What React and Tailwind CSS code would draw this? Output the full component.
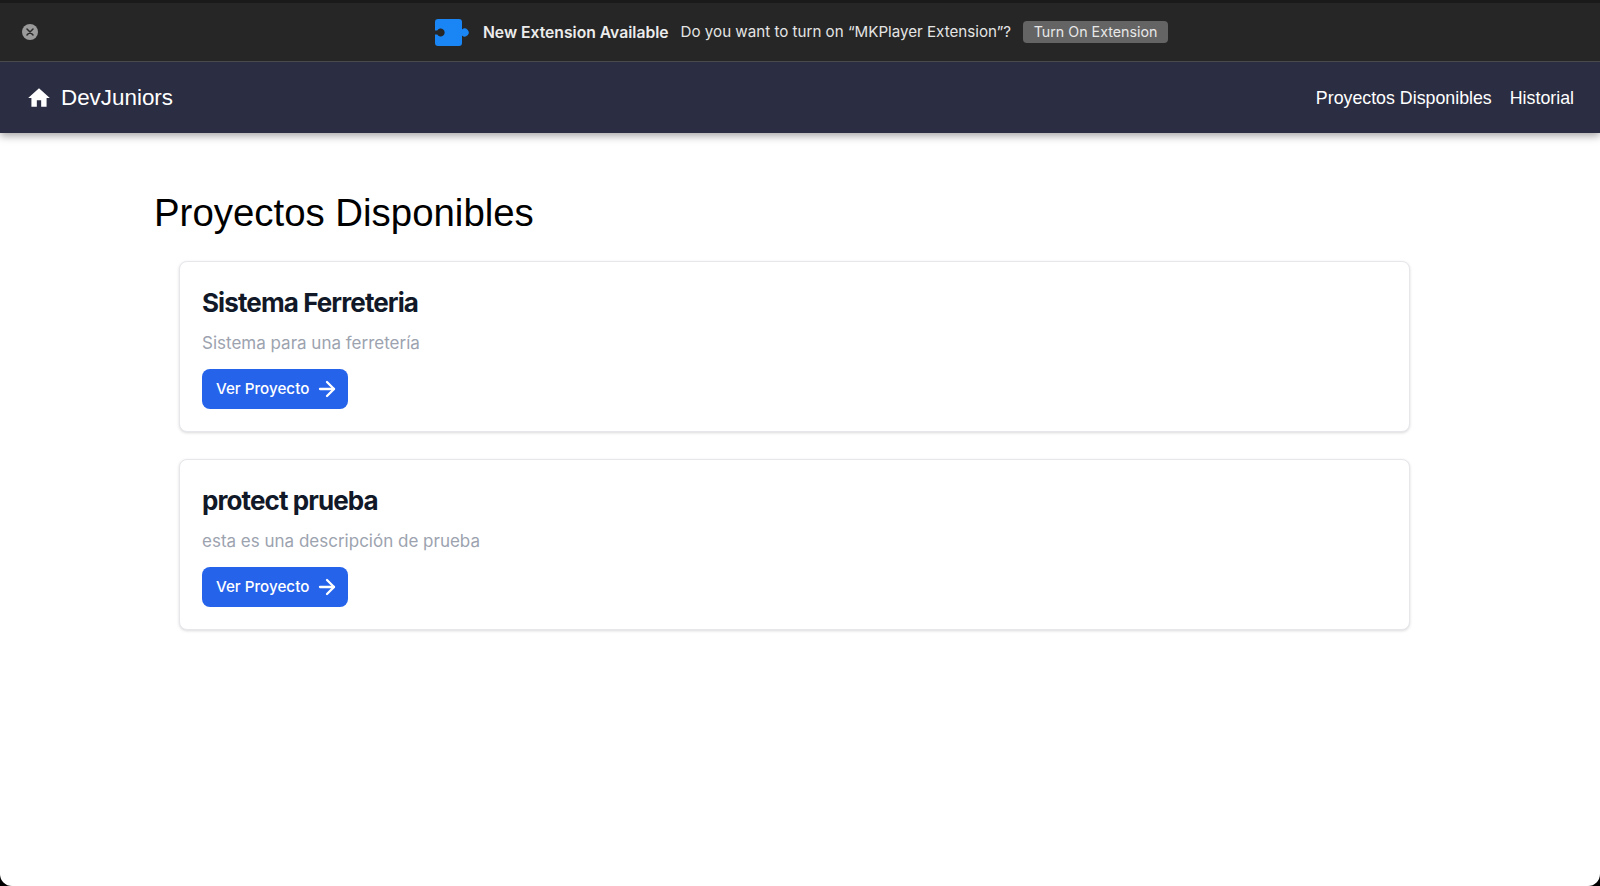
import { MdHome } from "react-icons/md";
import { ArrowRight } from "lucide-react";

const PROJECTS = [
    { id: 1, title: "Sistema Ferreteria", description: "Sistema para una ferretería" },
    { id: 2, title: "protect prueba", description: "esta es una descripción de prueba" },
];

function PuzzleIcon() {
    return (
        <svg width="34" height="27" viewBox="0 0 34 27" className="block">
            <path
                fill="#1a86f5"
                d="M3 0H24a3 3 0 0 1 3 3V10.5a4 4 0 1 1 0 6V24a3 3 0 0 1-3 3H3a3 3 0 0 1-3-3V15.5H2.2a4 4 0 1 0 0-4H0V3a3 3 0 0 1 3-3Z"
            />
        </svg>
    );
}

function ExtensionBar() {
    return (
        <div className="relative flex h-[59px] items-center justify-center border-b border-[#4a4a4a] bg-[#262626]">
            <div className="absolute left-[22px] top-[21px] flex h-4 w-4 items-center justify-center rounded-full bg-[#9a9a9a]">
                <svg width="8" height="8" viewBox="0 0 8 8">
                    <path d="M1 1L7 7M7 1L1 7" stroke="#2a2a2a" strokeWidth="1.5" strokeLinecap="round" />
                </svg>
            </div>
            <div className="ml-[3px] flex items-center font-['Inter',sans-serif]">
                <PuzzleIcon />
                <span className="ml-[14px] mt-[1px] text-[15.7px] font-semibold text-[#ececec]">New Extension Available</span>
                <span className="ml-[12px] mt-[1px] text-[15.15px] text-[#e4e4e4]">Do you want to turn on “MKPlayer Extension”?</span>
                <button className="ml-[12px] h-[22px] w-[145px] rounded-[4px] bg-[#646464] text-[14.25px] leading-none text-[#e8e8e8]">
                    Turn On Extension
                </button>
            </div>
        </div>
    );
}

function Navbar() {
    return (
        <nav className="relative flex h-[71px] items-center justify-between bg-[#2b2d42] px-[26px] font-['Liberation_Sans',sans-serif] text-white shadow-[0_3px_8px_rgba(0,0,0,0.35)]">
            <a className="flex items-center gap-[9px] text-[22.4px]">
                <MdHome className="mt-[1px] h-[26px] w-[26px]" />
                <span>DevJuniors</span>
            </a>
            <div className="mt-[1px] flex items-center gap-[18px] text-[17.8px]">
                <a>Proyectos Disponibles</a>
                <a>Historial</a>
            </div>
        </nav>
    );
}

function ProjectCard({ project }) {
    return (
        <div className="h-[171px] rounded-lg border border-[#e5e7eb] bg-white px-[22px] pt-[25px] shadow-[0_1px_3px_rgba(0,0,0,0.15)]">
            <h2 className="text-[26px] font-bold leading-8 tracking-[-0.9px] text-[#111827]">{project.title}</h2>
            <p className="mt-[12px] text-[17px] leading-6 text-[#9ca3af]">{project.description}</p>
            <button className="mt-[14px] flex h-[40px] w-[146px] items-center rounded-lg bg-[#2563eb] pl-[14px] text-[15.2px] font-medium text-white">
                Ver Proyecto
                <ArrowRight strokeWidth={2.3} className="ml-[6px] h-[24px] w-[24px]" />
            </button>
        </div>
    );
}

export default function App() {
    return (
        <div className="flex min-h-[886px] flex-col bg-black">
            <div className="h-[3px] bg-[#1a1a1a]" />
            <ExtensionBar />
            <div className="flex flex-1 flex-col overflow-hidden rounded-b-[12px] bg-white">
                <Navbar />
                <main className="px-[154px] pt-[55px] font-['Inter',sans-serif]">
                    <h1 className="font-['Liberation_Sans',sans-serif] text-[38.4px] leading-[50px] text-black">
                        Proyectos Disponibles
                    </h1>
                    <div className="ml-[25px] mr-[36px] mt-[23px] flex flex-col gap-[27px]">
                        {PROJECTS.map(project => (
                            <ProjectCard key={project.id} project={project} />
                        ))}
                    </div>
                </main>
            </div>
        </div>
    );
}
